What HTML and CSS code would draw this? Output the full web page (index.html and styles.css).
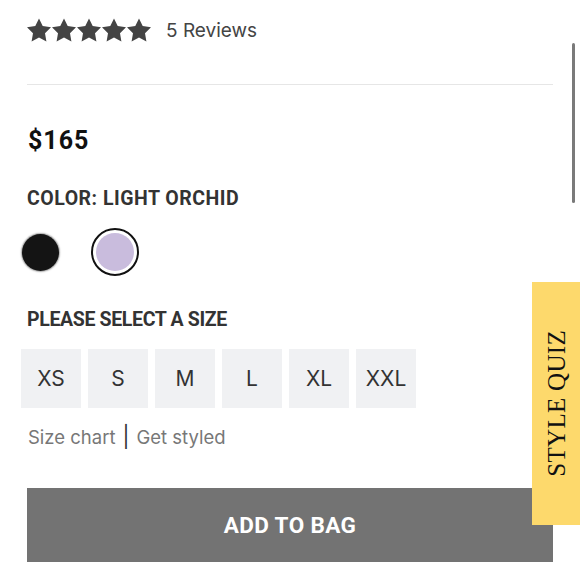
FILE: index.html
```html
<!DOCTYPE html>
<html lang="en">
<head>
<meta charset="utf-8">
<title>Product</title>
<link rel="stylesheet" href="styles.css">
</head>
<body>
<main class="page">
  <div class="rating">
    <div class="stars">
      <svg viewBox="2 1.5 20 20" class="star"><path d="M12 2l3.09 6.26L22 9.27l-5 4.87 1.18 6.88L12 17.77l-6.18 3.25L7 14.140 2 9.27l6.91-1.01L12 2z"/></svg>
      <svg viewBox="2 1.5 20 20" class="star"><path d="M12 2l3.09 6.26L22 9.27l-5 4.87 1.18 6.88L12 17.77l-6.18 3.25L7 14.14 2 9.27l6.91-1.01L12 2z"/></svg>
      <svg viewBox="2 1.5 20 20" class="star"><path d="M12 2l3.09 6.26L22 9.27l-5 4.87 1.18 6.88L12 17.77l-6.18 3.25L7 14.14 2 9.27l6.91-1.01L12 2z"/></svg>
      <svg viewBox="2 1.5 20 20" class="star"><path d="M12 2l3.09 6.26L22 9.27l-5 4.87 1.18 6.88L12 17.77l-6.18 3.25L7 14.14 2 9.27l6.91-1.01L12 2z"/></svg>
      <svg viewBox="2 1.5 20 20" class="star"><path d="M12 2l3.09 6.26L22 9.27l-5 4.87 1.18 6.88L12 17.77l-6.18 3.25L7 14.14 2 9.27l6.91-1.01L12 2z"/></svg>
    </div>
    <span class="reviews">5 Reviews</span>
  </div>
  <hr class="divider">
  <div class="price">$165</div>
  <div class="label color-label">COLOR: LIGHT ORCHID</div>
  <div class="swatches">
    <span class="swatch swatch-black"></span>
    <span class="swatch swatch-orchid"><span class="swatch-fill"></span></span>
  </div>
  <div class="label size-label">PLEASE SELECT A SIZE</div>
  <div class="sizes">
    <button class="size">XS</button>
    <button class="size">S</button>
    <button class="size">M</button>
    <button class="size">L</button>
    <button class="size">XL</button>
    <button class="size">XXL</button>
  </div>
  <div class="links"><span>Size chart</span><span class="sep">|</span><span>Get styled</span></div>
  <button class="add">ADD TO BAG</button>
</main>
<div class="quiz"><span class="quiz-text">STYLE QUIZ</span></div>
<div class="scrollbar"></div>
</body>
</html>
```
FILE: styles.css
```css
html, body {
  margin: 0;
  padding: 0;
  background: #fff;
}
body {
  width: 580px;
  height: 580px;
  overflow: hidden;
  position: relative;
  font-family: Inter, "Noto Sans", sans-serif;
}
.page {
  padding: 18px 27px 0 27px;
  width: 526px;
}
.rating {
  display: flex;
  align-items: center;
  height: 24px;
}
.stars {
  display: flex;
  gap: 1px;
}
.star {
  width: 24px;
  height: 24px;
  fill: #444;
}
.reviews {
  margin-left: 15px;
  font-size: 19px;
  color: #444;
  line-height: 24px;
  padding-top: 2px;
}
.divider {
  border: 0;
  border-top: 1px solid #e6e6e6;
  margin: 42px 0 0 0;
  height: 0;
}
.price {
  margin-top: 42px;
  margin-left: 1px;
  font-family: Roboto, sans-serif;
  font-weight: 700;
  font-size: 25px;
  letter-spacing: 1px;
  line-height: 28px;
  color: #111;
}
.label {
  font-family: Roboto, sans-serif;
  font-weight: 700;
  font-size: 19.5px;
  line-height: 24px;
  color: #333;
}
.color-label {
  margin-top: 32px;
  letter-spacing: 0.5px;
}
.size-label {
  margin-top: 32px;
  letter-spacing: -0.35px;
}
.swatches {
  display: flex;
  align-items: center;
  margin-top: 17px;
  margin-left: -5px;
  gap: 32px;
  height: 48px;
}
.swatch {
  display: block;
  border-radius: 50%;
  box-sizing: border-box;
}
.swatch-black {
  width: 37px;
  height: 37px;
  background: #141414;
  box-shadow: 0 0 1.5px 1px rgba(0,0,0,0.35);
}
.swatch-orchid {
  width: 48px;
  height: 48px;
  border: 2px solid #111;
  padding: 3px;
  background: #fff;
}
.swatch-fill {
  display: block;
  width: 100%;
  height: 100%;
  border-radius: 50%;
  background: #c9bcdd;
}
.sizes {
  display: flex;
  gap: 7px;
  margin-top: 17px;
  margin-left: -6px;
}
.size {
  width: 60px;
  height: 59px;
  border: 0;
  margin: 0;
  padding: 0;
  background: #f0f1f3;
  font-family: Inter, sans-serif;
  font-size: 21px;
  color: #333;
}
.links {
  margin-top: 17px;
  margin-left: 1px;
  font-size: 18.5px;
  line-height: 24px;
  color: #777;
}
.sep {
  color: #333;
  font-size: 21px;
  margin: 0 7px;
}
.add {
  display: block;
  width: 526px;
  height: 74px;
  margin-top: 39px;
  border: 0;
  background: #737373;
  color: #fff;
  font-family: Roboto, sans-serif;
  font-weight: 700;
  font-size: 22.5px;
  letter-spacing: 0.4px;
}
.quiz {
  position: absolute;
  right: 0;
  top: 282px;
  width: 48px;
  height: 243px;
  background: #fdd96c;
  display: flex;
  align-items: center;
  justify-content: center;
}
.quiz-text {
  writing-mode: vertical-rl;
  transform: rotate(180deg);
  font-family: "Liberation Serif", serif;
  font-size: 25px;
  letter-spacing: 0.3px;
  color: #111;
  line-height: 1;
}
.scrollbar {
  position: absolute;
  right: 5px;
  top: 43px;
  width: 3px;
  height: 160px;
  border-radius: 2px;
  background: #7a7a7a;
}
```
